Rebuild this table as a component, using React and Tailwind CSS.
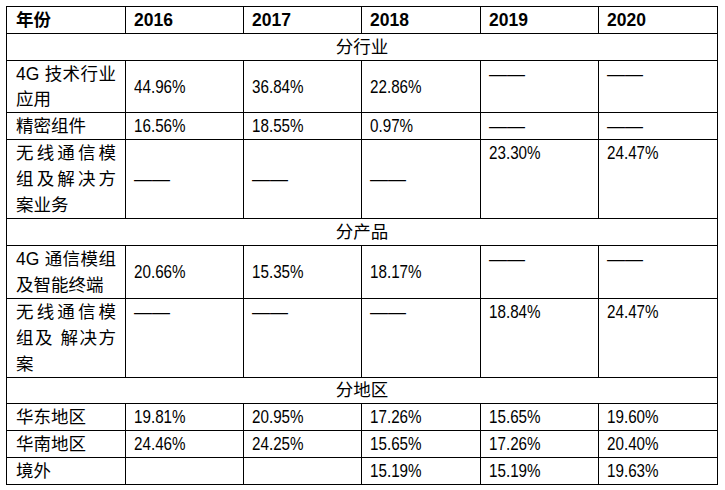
import React from "react";

const CJK = "font-['Liberation_Sans','Noto_Sans_CJK_SC',sans-serif]";

const P = ({ v }) => (
  <div className="w-max origin-left scale-x-80 font-['Liberation_Sans',sans-serif] text-[19px] leading-[26px]">
    {v}
  </div>
);

const D = () => (
  <div className="font-['Liberation_Sans',sans-serif] text-[18px] leading-[26px]">——</div>
);

const base = "border border-black py-0";

// a line whose characters are spread over the full width
const Spread = ({ text }) => (
  <div className="flex justify-between h-[26px] leading-[26px]">
    {text.split("").map((c, i) => (
      <span key={i}>{c}</span>
    ))}
  </div>
);

// a line justified through its spaces
const Just = ({ text }) => (
  <div className="h-[26px] leading-[26px] text-justify [text-align-last:justify]">{text}</div>
);

const Plain = ({ text, tight }) => (
  <div className={tight ? "h-[25px] leading-[24px]" : "h-[26px] leading-[26px]"}>{text}</div>
);

function Section({ label, tight }) {
  return (
    <tr>
      <td
        colSpan={6}
        className={`${base} ${tight ? "h-[25px] leading-[25px]" : "h-[26px] leading-[26px]"} px-[9px] align-middle text-center`}
      >
        {label}
      </td>
    </tr>
  );
}

function Row({ label, cells, va }) {
  return (
    <tr>
      <td className={`${base} px-[9px] align-top text-left`}>{label}</td>
      {cells.map((c, i) => (
        <td
          key={i}
          className={`${base} pl-[8px] pr-[9px] text-left ${
            (va && va[i]) === "top" ? "align-top" : "align-middle"
          }`}
        >
          {c === "-" ? <D /> : c === "" ? null : <P v={c} />}
        </td>
      ))}
    </tr>
  );
}

export default function App() {
  return (
    <div className={`bg-white w-[725px] h-[490px] pt-[6px] pl-[6px] text-black text-[17.5px] ${CJK}`}>
      <table className="table-fixed border-collapse w-[712px]">
        <colgroup>
          <col className="w-[119px]" />
          <col className="w-[118px]" />
          <col className="w-[118px]" />
          <col className="w-[119px]" />
          <col className="w-[118px]" />
          <col className="w-[119px]" />
        </colgroup>
        <tbody>
          <tr>
            {["年份", "2016", "2017", "2018", "2019", "2020"].map((h, i) => (
              <td
                key={h}
                className={`${base} h-[26px] leading-[26px] ${i === 0 ? "px-[9px]" : "pl-[8px] pr-[9px]"} align-middle text-left font-bold`}
              >
                {h}
              </td>
            ))}
          </tr>
          <Section label="分行业" />
          <Row
            label={
              <>
                <Just text="4G 技术行业" />
                <Plain text="应用" tight />
              </>
            }
            cells={["44.96%", "36.84%", "22.86%", "-", "-"]}
            va={["m", "m", "m", "top", "top"]}
          />
          <Row label={<Plain text="精密组件" />} cells={["16.56%", "18.55%", "0.97%", "-", "-"]} />
          <Row
            label={
              <>
                <Spread text="无线通信模" />
                <Spread text="组及解决方" />
                <Plain text="案业务" />
              </>
            }
            cells={["-", "-", "-", "23.30%", "24.47%"]}
            va={["m", "m", "m", "top", "top"]}
          />
          <Section label="分产品" />
          <Row
            label={
              <>
                <Just text="4G 通信模组" />
                <Plain text="及智能终端" />
              </>
            }
            cells={["20.66%", "15.35%", "18.17%", "-", "-"]}
            va={["m", "m", "m", "top", "top"]}
          />
          <Row
            label={
              <>
                <Spread text="无线通信模" />
                <Just text="组及 解决方" />
                <Plain text="案" />
              </>
            }
            cells={["-", "-", "-", "18.84%", "24.47%"]}
            va={["top", "top", "top", "top", "top"]}
          />
          <Section label="分地区" tight />
          <Row label={<Plain text="华东地区" />} cells={["19.81%", "20.95%", "17.26%", "15.65%", "19.60%"]} />
          <Row label={<Plain text="华南地区" />} cells={["24.46%", "24.25%", "15.65%", "17.26%", "20.40%"]} />
          <Row label={<Plain text="境外" />} cells={["", "", "15.19%", "15.19%", "19.63%"]} />
        </tbody>
      </table>
    </div>
  );
}
